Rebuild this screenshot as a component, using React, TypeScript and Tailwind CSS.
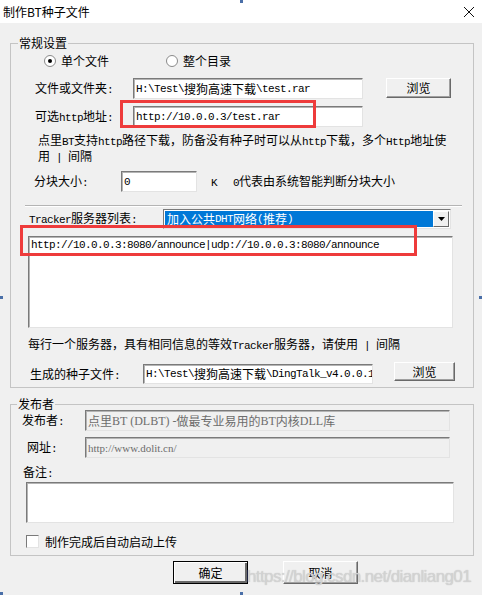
import React from "react";

const MONO = "font-['Liberation_Mono'] text-[11px] tracking-[-0.6px]";

// split text into runs: ascii gets the half-width mono face, the rest stays CJK
const Txt = ({ s, ascii = MONO }: { s: string; ascii?: string }) => (
  <>
    {s
      .split(/([\x20-\x7e]+)/)
      .filter(Boolean)
      .map((p, i) =>
        /^[\x20-\x7e]+$/.test(p) ? (
          <span key={i} className={ascii}>
            {p}
          </span>
        ) : (
          <span key={i}>{p}</span>
        )
      )}
  </>
);

const Field = ({ className = "", children }: { className?: string; children?: React.ReactNode }) => (
  <div
    className={`flex items-center pl-[2px] overflow-hidden whitespace-nowrap border border-t-[#7a7a7a] border-l-[#7a7a7a] border-r-[#e3e3e3] border-b-[#e3e3e3] shadow-[inset_1px_1px_0_#b4b4b4] ${className}`}
  >
    {children}
  </div>
);

const Btn = ({ className = "", label }: { className?: string; label: string }) => (
  <div
    className={`flex items-center justify-center bg-[#f0f0f0] border border-t-white border-l-white border-r-[#696969] border-b-[#696969] shadow-[inset_-1px_-1px_0_#a0a0a0] ${className}`}
  >
    {label}
  </div>
);

const Radio = ({ checked, label, className = "" }: { checked?: boolean; label: string; className?: string }) => (
  <div className={`flex items-center gap-[5px] ${className}`}>
    <div className="w-[12px] h-[12px] rounded-full bg-white border border-[#8a8a8a] flex items-center justify-center">
      {checked && <div className="w-[4px] h-[4px] rounded-full bg-black" />}
    </div>
    <span>{label}</span>
  </div>
);

const Handle = ({ className }: { className: string }) => (
  <div className={`absolute w-[3px] h-[3px] bg-[#4a6fa8] ${className}`} />
);

export default function App() {
  return (
    <div className="relative w-[482px] h-[595px] overflow-hidden bg-[#f0f0f0] text-[12px] leading-[12px] text-black font-['Noto_Sans_CJK_SC','Noto_Sans',sans-serif]">
      {/* title bar */}
      <div className="h-[23px] bg-white flex items-center justify-between pl-[3px] pr-[6px]">
        <span className="text-[12px] leading-[14px]">制作BT种子文件</span>
        <svg width="12" height="12" viewBox="0 0 12 12" className="mr-[1px]">
          <path d="M1 1 L11 11 M11 1 L1 11" stroke="#111" strokeWidth="1" />
        </svg>
      </div>

      {/* 常规设置 */}
      <div className="relative ml-[10px] mt-[20px] w-[464px] h-[345px] border border-[#c4c4c4]">
        <span className="absolute -top-[7px] left-[7px] px-[1px] bg-[#f0f0f0]">常规设置</span>

        <div className="flex items-center h-[14px] mt-[10px]">
          <Radio checked label="单个文件" className="ml-[33px]" />
          <Radio label="整个目录" className="ml-[57px]" />
        </div>

        <div className="flex items-start h-[21px] mt-[10px] pl-[24px]">
          <span className="w-[98px] self-center">
            <Txt s="文件或文件夹:" />
          </span>
          <Field className="w-[230px] h-[21px] bg-white">
            <Txt s="H:\Test\搜狗高速下载\test.rar" />
          </Field>
          <Btn label="浏览" className="ml-[23px] w-[65px] h-[20px]" />
        </div>

        <div className="flex items-center h-[21px] mt-[7px] pl-[24px]">
          <span className="w-[98px]">
            <Txt s="可选http地址:" />
          </span>
          <Field className="w-[230px] h-[21px] bg-white">
            <Txt s="http://10.0.0.3/test.rar" />
          </Field>
        </div>

        <div className="mt-[6px] pl-[27px] leading-[13px]">
          <Txt s="点里BT支持http路径下载，防备没有种子时可以从http下载，多个Http地址使" />
          <br />
          <Txt s="用 | 间隔" />
        </div>

        <div className="flex items-center h-[21px] mt-[6px] pl-[23px]">
          <span className="w-[87px]">
            <Txt s="分块大小:" />
          </span>
          <Field className="w-[76px] h-[21px] bg-white">
            <Txt s="0" />
          </Field>
          <span className="ml-[14px]">
            <Txt s="K" />
          </span>
          <span className="ml-[16px]">
            <Txt s="0代表由系统智能判断分块大小" />
          </span>
        </div>

        <div className="ml-[14px] mt-[13px] w-[437px] h-[2px] border-t border-t-[#b4b4b4] border-b border-b-white" />

        <div className="flex items-center h-[20px] mt-[2px] pl-[18px]">
          <span className="w-[134px]">
            <Txt s="Tracker服务器列表:" />
          </span>
          <div className="flex w-[288px] h-[20px] bg-white border border-t-[#7a7a7a] border-l-[#7a7a7a] border-r-[#e3e3e3] border-b-[#e3e3e3] p-[1px]">
            <div className="flex-1 bg-[#0078d7] text-white flex items-center pl-[2px] whitespace-nowrap">
              <Txt s="加入公共DHT网络(推荐)" />
            </div>
            <div className="w-[16px] flex items-center justify-center bg-[#f0f0f0] border border-t-white border-l-white border-r-[#696969] border-b-[#696969]">
              <svg width="7" height="4" viewBox="0 0 7 4">
                <path d="M0 0 H7 L3.5 4 Z" fill="#000" />
              </svg>
            </div>
          </div>
        </div>

        <Field className="ml-[17px] mt-[7px] w-[425px] h-[92px] bg-white !items-start pt-[2px]">
          <Txt s="http://10.0.0.3:8080/announce|udp://10.0.0.3:8080/announce" />
        </Field>

        <div className="mt-[10px] ml-[17px]">
          <Txt s="每行一个服务器，具有相同信息的等效Tracker服务器，请使用 | 间隔" />
        </div>

        <div className="flex items-start h-[21px] mt-[10px] pl-[19px]">
          <span className="w-[113px] mt-[6px]">
            <Txt s="生成的种子文件:" />
          </span>
          <Field className="w-[230px] h-[20px] mt-[2px] bg-white">
            <Txt s="H:\Test\搜狗高速下载\DingTalk_v4.0.0.1" />
          </Field>
          <Btn label="浏览" className="ml-[21px] w-[61px] h-[19px]" />
        </div>

        {/* red highlights from the screenshot */}
        <div className="absolute left-[109px] top-[56px] w-[196px] h-[28px] border-[3px] border-[#ee3b3b]" />
        <div className="absolute left-[9px] top-[181px] w-[397px] h-[31px] border-[3px] border-[#ee3b3b]" />
      </div>

      {/* 发布者 */}
      <div className="relative ml-[10px] mt-[16px] w-[464px] h-[152px] border border-[#c4c4c4]">
        <span className="absolute -top-[7px] left-[6px] px-[1px] bg-[#f0f0f0]">发布者</span>

        <div className="flex items-center h-[21px] mt-[5px] pl-[11px]">
          <span className="w-[63px]">
            <Txt s="发布者:" />
          </span>
          <Field className="w-[365px] h-[21px] bg-[#f0f0f0] text-[#6d6d6d]">
            <Txt s="点里BT (DLBT) - 做最专业易用的BT内核DLL库" ascii="font-['Liberation_Serif'] text-[12px]" />
          </Field>
        </div>

        <div className="flex items-center h-[21px] mt-[6px] pl-[16px]">
          <span className="w-[58px]">
            <Txt s="网址:" />
          </span>
          <Field className="w-[365px] h-[21px] bg-[#f0f0f0] text-[#6d6d6d]">
            <Txt s="http://www.dolit.cn/" ascii="font-['Liberation_Serif'] text-[11px]" />
          </Field>
        </div>

        <div className="mt-[8px] pl-[12px]">
          <Txt s="备注:" />
        </div>

        <Field className="ml-[15px] mt-[2px] w-[428px] h-[41px] bg-white" />

        <div className="flex items-center h-[13px] mt-[12px] ml-[15px] gap-[6px]">
          <div className="w-[13px] h-[13px] bg-white border border-t-[#7a7a7a] border-l-[#7a7a7a] border-r-[#e3e3e3] border-b-[#e3e3e3]" />
          <span>制作完成后自动启动上传</span>
        </div>
      </div>

      {/* bottom buttons */}
      <div className="flex mt-[5px] pl-[173px] gap-[35px]">
        <Btn label="确定" className="w-[75px] h-[23px] !border-black shadow-[inset_1px_1px_0_#fff,inset_-2px_-2px_0_#696969]" />
        <Btn label="取消" className="w-[75px] h-[23px]" />
      </div>

      {/* watermark */}
      <div className="absolute left-[247px] top-[567px] text-[17px] leading-[20px] tracking-[-0.6px] font-['Liberation_Sans',sans-serif] text-[#d8d8d8]/80 [text-shadow:0_0_1px_#b8b8b8] whitespace-nowrap">
        https://blog.csdn.net/dianliang01
      </div>

      {/* screenshot resize handles */}
      <Handle className="top-0 left-[240px]" />
      <Handle className="top-[296px] left-0" />
      <Handle className="top-[296px] right-0" />
      <Handle className="bottom-0 left-0" />
      <Handle className="bottom-0 left-[240px]" />
    </div>
  );
}
